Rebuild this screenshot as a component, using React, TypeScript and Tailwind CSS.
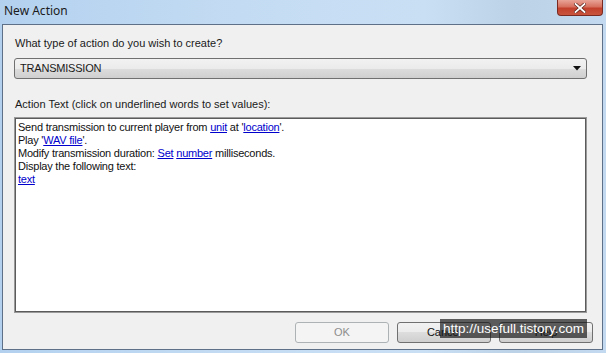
import React from "react";

const font = { fontFamily: '"Liberation Sans", Arial, sans-serif' };

function Btn({ label, disabled }: { label: string; disabled?: boolean }) {
  return (
    <div
      className={
        "w-[94px] h-[21px] rounded-[3px] border flex items-center justify-center text-[11px] " +
        (disabled
          ? "border-[#adb2b5] bg-[#f4f4f4] text-[#8d8d8d]"
          : "border-[#707070] bg-[linear-gradient(#f2f2f2_0%,#ebebeb_50%,#dddddd_50%,#cfcfcf_100%)] text-[#111]")
      }
    >
      {label}
    </div>
  );
}

export default function App() {
  return (
    <div
      className="w-[606px] h-[353px] relative overflow-hidden bg-[linear-gradient(90deg,#b3d1ef_0%,#c4dcf3_40%,#c9dff4_70%,#bcd2e6_85%,#c2d9ef_100%)] flex flex-col"
      style={font}
    >
      {/* Title bar */}
      <div className="h-[24px] flex items-start justify-between">
        <div className="pl-[4px] pt-[2px] text-[12px] text-[#1b1b1b]" style={{ fontFamily: '"Noto Sans", sans-serif' }}>
          New Action
        </div>
        <div className="mr-[3px] w-[46px] h-[16px] rounded-b-[4px] border border-t-0 border-[#7a2a20] bg-[linear-gradient(#e8a497_0%,#d7705f_45%,#c2402c_55%,#c9553f_100%)] flex items-center justify-center">
          <svg width="12" height="10" viewBox="0 0 12 10">
            <path d="M1.5 1 L10.5 9 M10.5 1 L1.5 9" stroke="#5a2018" strokeWidth="3.2" strokeLinecap="square" />
            <path d="M1.5 1 L10.5 9 M10.5 1 L1.5 9" stroke="#ffffff" strokeWidth="1.8" strokeLinecap="square" />
          </svg>
        </div>
      </div>

      {/* Client area */}
      <div className="ml-[2px] mr-[3px] h-[326px] border border-[#5d7087] bg-[#f0f0f0] flex flex-col pl-[11px] pr-[15px] text-[11px] text-[#1a1a1a]">
        <div className="mt-[12px] h-[13px] leading-[13px] pl-[1px]">What type of action do you wish to create?</div>
        <div className="mt-[8px] h-[21px] rounded-[3px] border border-[#707070] bg-[linear-gradient(#f2f2f2_0%,#ebebeb_50%,#dddddd_50%,#cfcfcf_100%)] flex items-center justify-between pl-[5px] pr-[5px]">
          <span className="text-[11px] tracking-[-0.2px]">TRANSMISSION</span>
          <svg width="8" height="5" viewBox="0 0 8 5">
            <path d="M0 0 L8 0 L4 4.5 Z" fill="#111" />
          </svg>
        </div>
        <div className="mt-[19px] h-[13px] leading-[13px] pl-[1px]">Action Text (click on underlined words to set values):</div>
        <div className="mt-[6px] h-[196px] border border-[#9a9a9a]">
          <div className="h-full border border-[#5b5b5b] bg-white pl-[2px] pt-[2px] text-[11px] leading-[13px] tracking-[-0.22px] text-[#111]">
            <div>
              Send transmission to current player from <a className="text-[#0000cc] underline">unit</a> at '
              <a className="text-[#0000cc] underline">location</a>'.
            </div>
            <div>
              Play '<a className="text-[#0000cc] underline">WAV file</a>'.
            </div>
            <div>
              Modify transmission duration: <a className="text-[#0000cc] underline">Set</a>{" "}
              <a className="text-[#0000cc] underline">number</a> milliseconds.
            </div>
            <div>Display the following text:</div>
            <div>
              <a className="text-[#0000cc] underline">text</a>
            </div>
          </div>
        </div>
        <div className="mt-[9px] flex justify-end gap-[8px] mr-[-6px]">
          <Btn label="OK" disabled />
          <Btn label="Cancel" />
          <Btn label="Help" />
        </div>
      </div>

      {/* Watermark */}
      <div className="absolute left-[440px] top-[319px] w-[147px] h-[19px] bg-[rgba(20,20,20,0.68)] flex items-center justify-center text-white text-[13.5px] leading-none">
        http://usefull.tistory.com
      </div>
    </div>
  );
}
